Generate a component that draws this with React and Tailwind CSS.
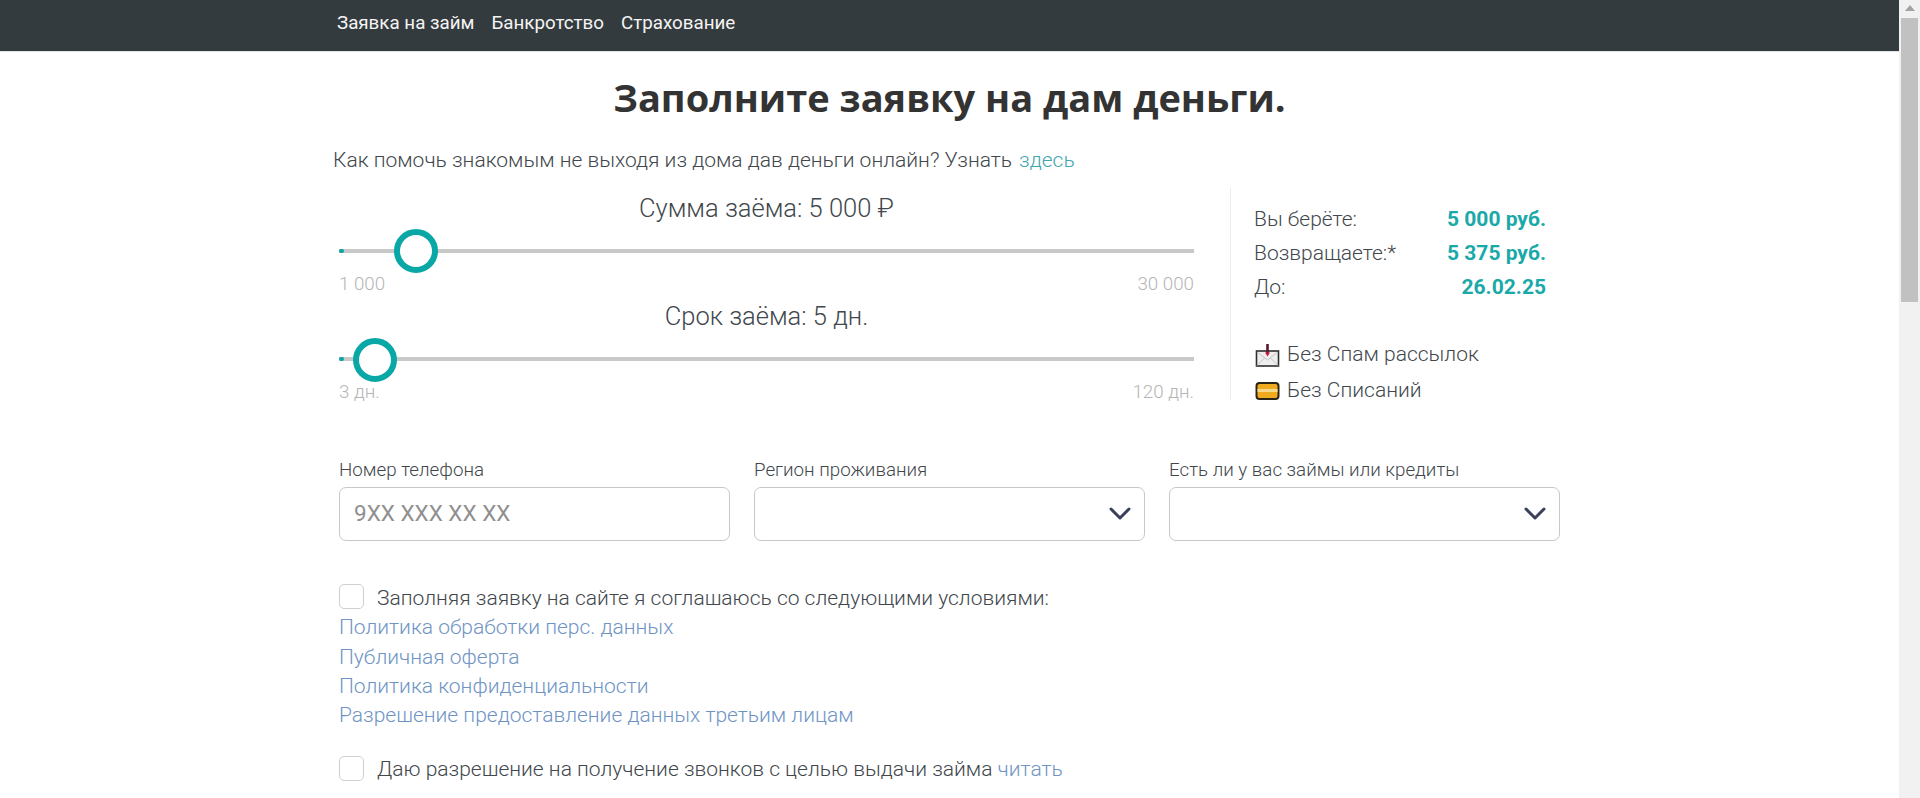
import React from "react";

const roboto = "[font-family:Roboto,sans-serif]";

function Slider({ title, min, max, knob, knobTop }) {
  return (
    <div>
      <div className="h-10 flex items-center justify-center text-[25.5px] font-light text-[#41474c]">{title}</div>
      <div className="relative h-11 mt-px flex items-center">
        <div className="relative w-full h-1 bg-[#c9c9c9]">
          <div className="h-1 w-[5px] rounded-full bg-[#0aa7a7]"></div>
        </div>
        <div className={`absolute ${knobTop} ${knob} size-11 rounded-full border-[6px] border-[#0aa7a7] bg-white`}></div>
      </div>
      <div className="h-[22px] flex items-center justify-between text-[18.750px] font-light text-[#b5b5b5]">
        <span>{min}</span>
        <span>{max}</span>
      </div>
    </div>
  );
}

function Row({ label, value }) {
  return (
    <div className="h-[34px] flex items-center justify-between">
      <span className="text-[21px] font-light text-[#41474c]">{label}</span>
      <span className="font-bold text-[21px] text-[#1aa9a9]">{value}</span>
    </div>
  );
}

function Chevron() {
  return (
    <svg width="22" height="14" viewBox="0 0 22 14" fill="none" className="absolute right-[14px] top-[19px]">
      <path d="M2 3l9 9 9-9" stroke="#3a3f5a" strokeWidth="3" strokeLinecap="round" strokeLinejoin="round" />
    </svg>
  );
}

function Field({ label, children }) {
  return (
    <div>
      <div className="h-6 flex items-center text-[18.750px] font-light text-[#41474c] whitespace-nowrap">{label}</div>
      <div className="relative mt-[5px] h-[54px]">{children}</div>
    </div>
  );
}

function Box() {
  return <span className="inline-block shrink-0 size-[25px] rounded-[5px] border border-[#cfcfcf] bg-white"></span>;
}

export default function App() {
  return (
    <div className={`flex h-[798px] overflow-hidden bg-white ${roboto}`}>
      <div className="flex-1 min-w-0">
        <nav className="h-[52px] bg-[#343b3f] border-b border-[#dfe2e4]">
          <div className="mx-auto w-[1221px] h-[47px] -translate-x-[2px] flex items-center gap-[17px] text-[18.750px] text-[#f4f4f4] font-normal">
            <a>Заявка на займ</a>
            <a>Банкротство</a>
            <a>Страхование</a>
          </div>
        </nav>
        <main className="mx-auto w-[1221px]">
          <h1 className="mt-[21px] h-12 flex items-center justify-center text-[38px] font-bold text-[#333333] [font-family:'Open_Sans',sans-serif]">
            Заполните заявку на дам деньги.
          </h1>
          <p className="mt-[28px] -ml-[6px] h-6 flex items-center gap-[7px] text-[21px] font-light text-[#41474c]">
            <span>Как помочь знакомым не выходя из дома дав деньги онлайн? Узнать</span>
            <a className="text-[#3fa7ad]">здесь</a>
          </p>
          <section className="mt-[15px] flex items-start">
            <div className="w-[855px] shrink-0">
              <Slider title="Сумма заёма: 5 000 ₽" min="1 000" max="30 000" knob="left-[55px]" knobTop="top-0" />
              <div className="pt-px">
                <Slider title="Срок заёма: 5 дн." min="3 дн." max="120 дн." knob="left-[14px]" knobTop="top-px" />
              </div>
            </div>
            <aside className="ml-9 w-[316px] h-[212px] border-l border-[#ececec] pl-[23px] pt-[15px]">
              <Row label="Вы берёте:" value="5 000 руб." />
              <Row label="Возвращаете:*" value="5 375 руб." />
              <Row label="До:" value="26.02.25" />
              <div className="mt-[32px] h-[36px] flex items-center gap-[7px] text-[21px] font-light text-[#41474c]">
                <svg width="26" height="25" viewBox="0 0 26 25" className="shrink-0">
                  <rect x="2.500" y="8" width="22" height="15" fill="#eeeeee" stroke="#2f2f2f" strokeWidth="1.600" />
                  <path d="M3 9l10.500 8L24 9M3 22.500l7.500-7.500M24 22.500L16.500 15" fill="none" stroke="#c4c4c4" />
                  <path d="M13.500 1v9" stroke="#5a1a2a" strokeWidth="2.600" />
                  <path d="M11 9.500h5L13.500 13.500z" fill="#d6174a" />
                </svg>
                <span>Без Спам рассылок</span>
              </div>
              <div className="h-[36px] flex items-center gap-[7px] text-[21px] font-light text-[#41474c]">
                <svg width="26" height="20" viewBox="0 0 26 20" className="shrink-0">
                  <rect x="2.500" y="2" width="22" height="16" rx="3" fill="#f0aa1e" stroke="#2a2418" strokeWidth="2" />
                  <rect x="3.500" y="8" width="20" height="3" fill="#f7d98a" />
                </svg>
                <span>Без Списаний</span>
              </div>
            </aside>
          </section>
          <section className="mt-[55px] grid grid-cols-3 gap-x-6">
            <Field label="Номер телефона">
              <div className="h-full flex items-center pl-[14px] rounded-[7px] border border-[#c8c8c8] text-[22.500px] text-[#8f8f8f]">
                9XX XXX XX XX
              </div>
            </Field>
            <Field label="Регион проживания">
              <div className="h-full rounded-[7px] border border-[#c8c8c8]"></div>
              <Chevron />
            </Field>
            <Field label="Есть ли у вас займы или кредиты">
              <div className="h-full rounded-[7px] border border-[#c8c8c8]"></div>
              <Chevron />
            </Field>
          </section>
          <section className="mt-[43px] text-[21px] font-light leading-[29.330px] text-[#41474c]">
            <div className="flex items-start gap-[13px]">
              <span className="flex"><Box /></span>
              <span>Заполняя заявку на сайте я соглашаюсь со следующими условиями:</span>
            </div>
            <div className="flex flex-col text-[#6f94c4]">
              <a>Политика обработки перс. данных</a>
              <a>Публичная оферта</a>
              <a>Политика конфиденциальности</a>
              <a>Разрешение предоставление данных третьим лицам</a>
            </div>
            <div className="mt-[24px] flex items-start gap-[13px]">
              <span className="flex pt-px"><Box /></span>
              <span>
                Даю разрешение на получение звонков с целью выдачи займа{" "}
                <a className="text-[#6f94c4]">читать</a>
              </span>
            </div>
          </section>
        </main>
      </div>
      <div className="w-[21px] shrink-0 h-full bg-[#f1f1f1] flex flex-col items-center">
        <svg width="10" height="6" viewBox="0 0 10 6" className="mt-[5px] shrink-0">
          <path d="M5 0l5 6H0z" fill="#a3a3a3" />
        </svg>
        <div className="mt-[7px] w-[17px] h-[284px] bg-[#c1c1c1]"></div>
      </div>
    </div>
  );
}
